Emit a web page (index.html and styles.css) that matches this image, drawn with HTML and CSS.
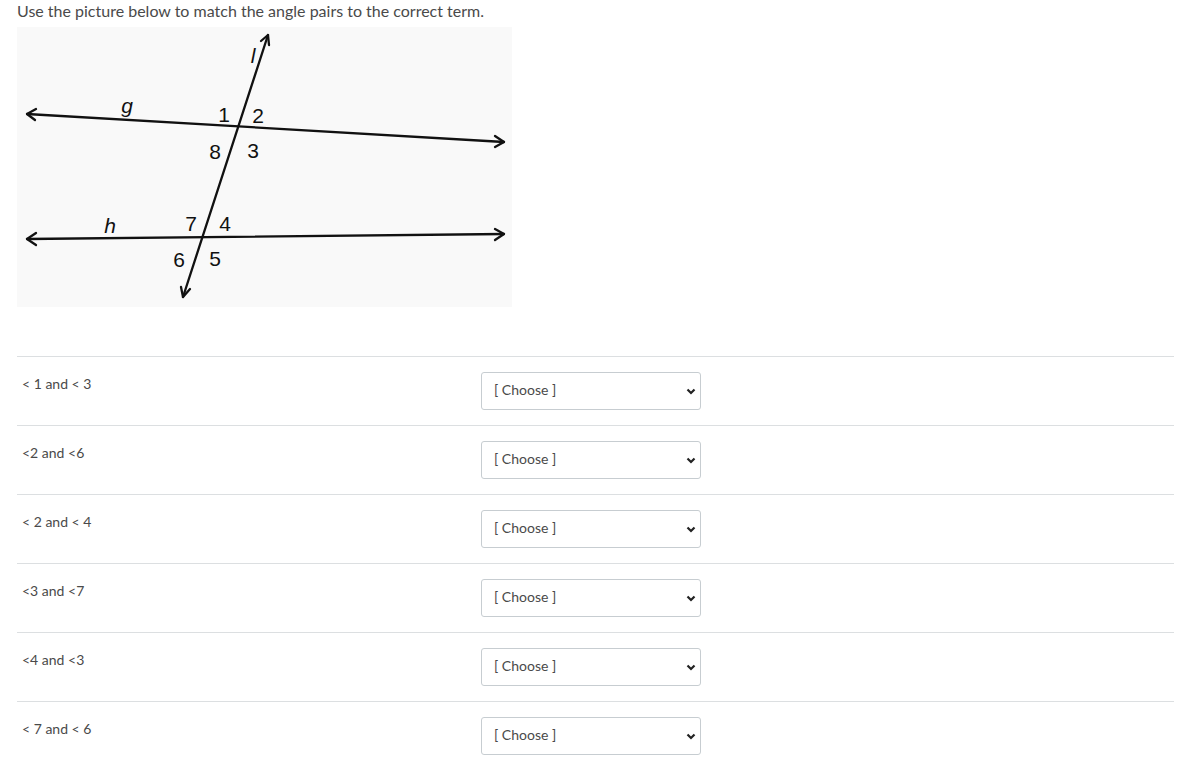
FILE: index.html
```html
<!DOCTYPE html>
<html>
<head>
<meta charset="utf-8">
<link rel="stylesheet" href="styles.css">
</head>
<body>
<div class="page">
  <p class="title">Use the picture below to match the angle pairs to the correct term.</p>
  <div class="figure">
    <svg width="495" height="280" viewBox="0 0 495 280" xmlns="http://www.w3.org/2000/svg">
      <g stroke="#111" stroke-width="2.3" fill="none" stroke-linecap="round" stroke-linejoin="round">
        <line x1="10" y1="87" x2="487" y2="115"/>
        <line x1="10" y1="212" x2="487" y2="207"/>
        <line x1="251" y1="8" x2="166" y2="270"/>
        <polyline points="19,82 10,87 18,93"/>
        <polyline points="478,109 487,115 478,120"/>
        <polyline points="19,206 10,212 19,218"/>
        <polyline points="478,202 487,207 478,213"/>
        <polyline points="244,14 251,8 252,18"/>
        <polyline points="164,260 166,270 173,262"/>
      </g>
      <g class="lbl" font-family="Liberation Sans, Arial, sans-serif" font-size="21" fill="#111" text-anchor="middle" dominant-baseline="central">
        <text x="207" y="87">1</text>
        <text x="241" y="88">2</text>
        <text x="198" y="124">8</text>
        <text x="236" y="123">3</text>
        <text x="174" y="196">7</text>
        <text x="208" y="196">4</text>
        <text x="162" y="232">6</text>
        <text x="198" y="231">5</text>
        <text x="110" y="78" font-style="italic">g</text>
        <text x="93" y="198" font-style="italic">h</text>
        <text x="236" y="28" font-style="italic">l</text>
      </g>
    </svg>
  </div>

  <div class="rows">
    <div class="row">
      <div class="label">&lt; 1 and &lt; 3</div>
      <div class="pick"><select class="sel"><option>[ Choose ]</option></select><svg class="chev" width="10" height="7" viewBox="0 0 10 7"><polyline points="1.5,1.5 5,5 8.5,1.5" fill="none" stroke="#222" stroke-width="2.2"/></svg></div>
    </div>
    <div class="row">
      <div class="label">&lt;2 and &lt;6</div>
      <div class="pick"><select class="sel"><option>[ Choose ]</option></select><svg class="chev" width="10" height="7" viewBox="0 0 10 7"><polyline points="1.5,1.5 5,5 8.5,1.5" fill="none" stroke="#222" stroke-width="2.2"/></svg></div>
    </div>
    <div class="row">
      <div class="label">&lt; 2 and &lt; 4</div>
      <div class="pick"><select class="sel"><option>[ Choose ]</option></select><svg class="chev" width="10" height="7" viewBox="0 0 10 7"><polyline points="1.5,1.5 5,5 8.5,1.5" fill="none" stroke="#222" stroke-width="2.2"/></svg></div>
    </div>
    <div class="row">
      <div class="label">&lt;3 and &lt;7</div>
      <div class="pick"><select class="sel"><option>[ Choose ]</option></select><svg class="chev" width="10" height="7" viewBox="0 0 10 7"><polyline points="1.5,1.5 5,5 8.5,1.5" fill="none" stroke="#222" stroke-width="2.2"/></svg></div>
    </div>
    <div class="row">
      <div class="label">&lt;4 and &lt;3</div>
      <div class="pick"><select class="sel"><option>[ Choose ]</option></select><svg class="chev" width="10" height="7" viewBox="0 0 10 7"><polyline points="1.5,1.5 5,5 8.5,1.5" fill="none" stroke="#222" stroke-width="2.2"/></svg></div>
    </div>
    <div class="row">
      <div class="label">&lt; 7 and &lt; 6</div>
      <div class="pick"><select class="sel"><option>[ Choose ]</option></select><svg class="chev" width="10" height="7" viewBox="0 0 10 7"><polyline points="1.5,1.5 5,5 8.5,1.5" fill="none" stroke="#222" stroke-width="2.2"/></svg></div>
    </div>
  </div>
</div>
</body>
</html>
```

FILE: styles.css
```css
html, body {
  margin: 0;
  padding: 0;
  background: #ffffff;
}

.page {
  padding: 0 17px 0 17px;
  font-family: Lato, "Liberation Sans", Arial, sans-serif;
  color: #4a4a4a;
}

.title {
  margin: 0;
  padding-top: 1px;
  padding-bottom: 2px;
  font-size: 16px;
  line-height: 20px;
  height: 21px;
}

.figure {
  margin-top: 3px;
  width: 495px;
  height: 280px;
  background: #f9f9f9;
}

.figure svg {
  display: block;
}

.rows {
  margin-top: 49px;
}

.row {
  display: flex;
  align-items: flex-start;
  border-top: 1px solid #dcdfe1;
  height: 68px;
}

.label {
  width: 459px;
  padding-left: 5px;
  padding-top: 17px;
  font-size: 14px;
  line-height: 20px;
  color: #4a4a4a;
}

.pick {
  position: relative;
  margin-top: 15px;
  width: 220px;
  height: 38px;
}

.sel {
  -webkit-appearance: none;
  appearance: none;
  box-sizing: border-box;
  width: 220px;
  height: 38px;
  margin: 0;
  padding: 0 24px 4px 12px;
  border: 1px solid #c7cdd1;
  border-radius: 3px;
  background: #ffffff;
  font-family: Lato, "Liberation Sans", Arial, sans-serif;
  font-size: 14px;
  color: #4a4a4a;
}

.chev {
  position: absolute;
  right: 5px;
  top: 16px;
  pointer-events: none;
}
```
